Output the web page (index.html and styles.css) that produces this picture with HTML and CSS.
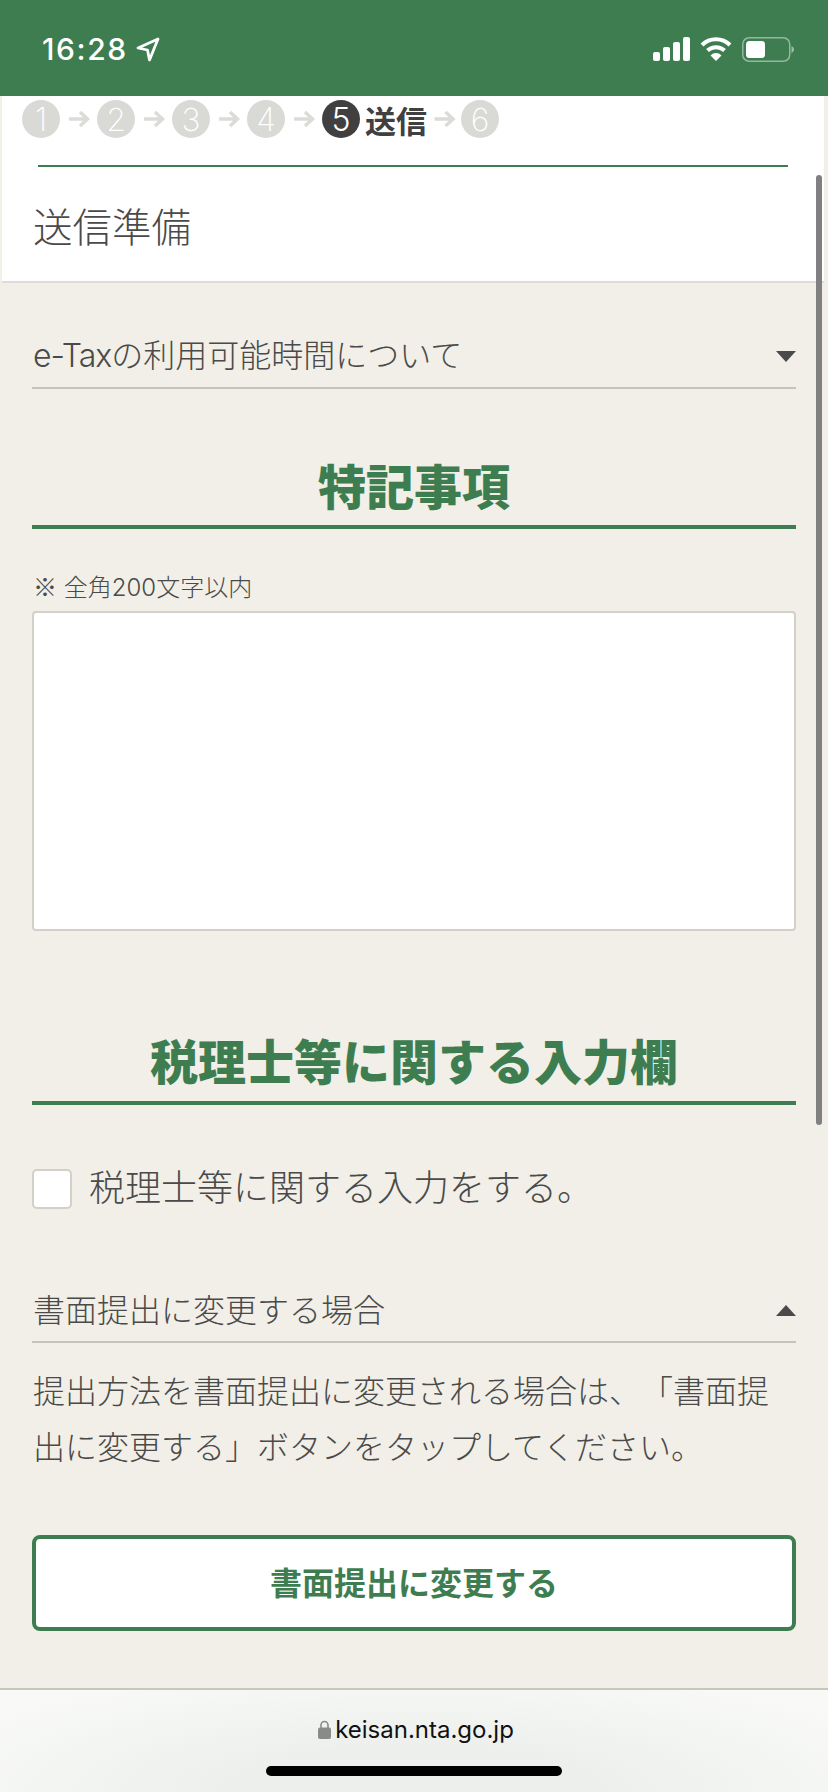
FILE: index.html
```html
<!DOCTYPE html>
<html lang="ja">

<head>
  <meta charset="UTF-8">
  <title>送信準備</title>
  <link rel="stylesheet" href="styles.css">
</head>

<body>
  <div class="phone">
    <div class="status-bar">
      <div class="status-left">
        <span class="time">16:28</span>
        <svg class="location" width="24" height="25" viewBox="0 0 24 25">
          <path d="M22 2 L2 11 L11.500 13 L13.500 23 Z" fill="none" stroke="#fff" stroke-width="2.800" stroke-linejoin="round"/>
        </svg>
      </div>
      <div class="status-right">
        <svg width="37" height="24" viewBox="0 0 37 24">
          <rect x="0" y="15" width="7" height="9" rx="2" fill="#fff"/>
          <rect x="10" y="10" width="7" height="14" rx="2" fill="#fff"/>
          <rect x="20" y="5" width="7" height="19" rx="2" fill="#fff"/>
          <rect x="30" y="0" width="7" height="24" rx="2" fill="#fff"/>
        </svg>
        <svg width="32" height="24" viewBox="0 0 32 24">
          <path d="M2 8 A20 20 0 0 1 30 8" fill="none" stroke="#fff" stroke-width="4"/>
          <path d="M7.500 13.500 A12.500 12.500 0 0 1 24.500 13.500" fill="none" stroke="#fff" stroke-width="4"/>
          <path d="M16 24 L10.500 18.500 A7.500 7.500 0 0 1 21.500 18.500 Z" fill="#fff"/>
        </svg>
        <svg width="52" height="25" viewBox="0 0 52 25">
          <rect x="0.750" y="0.750" width="47" height="23.500" rx="6.500" fill="none" stroke="#fff" stroke-opacity="0.45" stroke-width="1.500"/>
          <rect x="4" y="4" width="19" height="17" rx="3.500" fill="#fff"/>
          <path d="M49.500 9 C51 10 52 11 52 12.500 C52 14 51 15 49.500 16 Z" fill="#fff" fill-opacity="0.5"/>
        </svg>
      </div>
    </div>

    <div class="top-card">
      <div class="steps">
        <span class="step-num">1</span>
        <svg class="step-arrow" width="37" height="22" viewBox="0 0 37 22"><path d="M9 11 H27 M20 4 L27.500 11 L20 18" fill="none" stroke="#dbdbd7" stroke-width="3.500"/></svg>
        <span class="step-num">2</span>
        <svg class="step-arrow" width="37" height="22" viewBox="0 0 37 22"><path d="M9 11 H27 M20 4 L27.500 11 L20 18" fill="none" stroke="#dbdbd7" stroke-width="3.500"/></svg>
        <span class="step-num">3</span>
        <svg class="step-arrow" width="37" height="22" viewBox="0 0 37 22"><path d="M9 11 H27 M20 4 L27.500 11 L20 18" fill="none" stroke="#dbdbd7" stroke-width="3.500"/></svg>
        <span class="step-num">4</span>
        <svg class="step-arrow" width="37" height="22" viewBox="0 0 37 22"><path d="M9 11 H27 M20 4 L27.500 11 L20 18" fill="none" stroke="#dbdbd7" stroke-width="3.500"/></svg>
        <span class="step-num step-current">5</span>
        <span class="step-label">送信</span>
        <svg class="step-arrow" width="34" height="22" viewBox="1.500 0 34 22"><path d="M9 11 H27 M20 4 L27.500 11 L20 18" fill="none" stroke="#dbdbd7" stroke-width="3.500"/></svg>
        <span class="step-num">6</span>
      </div>
      <div class="step-line"></div>
      <h1 class="page-title">送信準備</h1>
    </div>

    <div class="content">
      <div class="accordion accordion-first">
        <span class="accordion-text"><span class="latin">e-Tax</span>の利用可能時間について</span>
        <span class="tri tri-down"></span>
      </div>

      <h2 class="heading heading-first">特記事項</h2>
      <p class="note"><span class="note-mark">※</span> 全角200文字以内</p>
      <div class="textarea"></div>

      <h2 class="heading heading-second">税理士等に関する入力欄</h2>
      <div class="check-row">
        <span class="checkbox"></span>
        <span class="check-label">税理士等に関する入力をする。</span>
      </div>

      <div class="accordion accordion-second">
        <span class="accordion-text">書面提出に変更する場合</span>
        <span class="tri tri-up"></span>
      </div>
      <p class="body-text">提出方法を書面提出に変更される場合は、「書面提出に変更する」ボタンをタップしてください。</p>
      <div class="button"><span class="button-text">書面提出に変更する</span></div>
    </div>

    <div class="url-bar">
      <div class="url">
        <svg width="13" height="19" viewBox="0 0 13 19">
          <path d="M3 8 V5 A3.500 3.500 0 0 1 10 5 V8" fill="none" stroke="#8a8a8a" stroke-width="1.600"/>
          <rect x="0" y="7.500" width="13" height="11.500" rx="2" fill="#8a8a8a"/>
        </svg>
        <span>keisan.nta.go.jp</span>
      </div>
      <div class="home-bar"></div>
    </div>

    <div class="scrollbar"></div>
  </div>
</body>

</html>
```

FILE: styles.css
```css
* {
  box-sizing: border-box;
}

body {
  margin: 0;
  font-family: 'Inter', 'Noto Sans CJK JP', sans-serif;
  color: #4a4a4a;
  background-color: #f1efe7;
  text-spacing-trim: space-all;
}

.phone {
  position: relative;
  display: flex;
  flex-direction: column;
  width: 828px;
  height: 1792px;
  overflow: hidden;
}

/* status bar */
.status-bar {
  flex: none;
  display: flex;
  justify-content: space-between;
  height: 96px;
  padding: 34px 34px 0 42px;
  background-color: #3e7d50;
}

.status-left {
  display: flex;
  align-items: flex-start;
  gap: 8px;
  height: 30px;
}

.time {
  font-size: 30px;
  font-weight: 500;
  line-height: 30px;
  letter-spacing: 1.6px;
  color: #ffffff;
}

.location {
  margin-top: 3px;
}

.status-right {
  display: flex;
  align-items: flex-start;
  gap: 10px;
  margin-top: 3px;
}

/* steps */
.top-card {
  flex: none;
  height: 187px;
  margin: 0 4px 0 2px;
  background-color: #ffffff;
  border-bottom: 2px solid #dddcd8;
}

.steps {
  display: flex;
  align-items: center;
  height: 38px;
  margin-top: 4px;
  padding-left: 20px;
}

.step-num {
  display: flex;
  align-items: center;
  justify-content: center;
  flex: none;
  width: 38px;
  height: 38px;
  border-radius: 50%;
  font-size: 32px;
  font-weight: 200;
  color: #ffffff;
  background-color: #d9d9d6;
}

.step-current {
  font-weight: 300;
  background-color: #404040;
}

.step-arrow {
  flex: none;
}

.step-label {
  margin-left: 5px;
  padding-top: 5px;
  font-size: 31px;
  font-weight: 700;
  line-height: 38px;
  color: #404040;
}

.step-line {
  height: 2px;
  margin: 27px 36px 0 36px;
  background-color: #3e7d50;
}

.page-title {
  margin: 32px 0 0 31px;
  font-size: 39.500px;
  font-weight: 300;
  line-height: 58px;
}

/* main column */
.content {
  flex: 1;
  padding: 0 32px;
}

.accordion {
  display: flex;
  align-items: center;
  justify-content: space-between;
  padding: 0 0 0 1px;
  border-bottom: 2px solid #c5c3bb;
}

.accordion-text {
  padding-bottom: 6px;
  font-size: 32px;
  font-weight: 300;
  line-height: 44px;
}

.latin {
  letter-spacing: -1px;
}

.accordion-first {
  height: 59px;
  margin-top: 47px;
}

.accordion-second {
  height: 62px;
  margin-top: 71px;
}

.accordion-second .accordion-text {
  padding-bottom: 1px;
}

.tri {
  width: 0;
  height: 0;
  margin-bottom: 4px;
  border-left: 10px solid transparent;
  border-right: 10px solid transparent;
}

.tri-down {
  border-top: 11px solid #4a4a4a;
}

.tri-up {
  margin-bottom: 2px;
  border-bottom: 11px solid #4a4a4a;
}

.heading {
  margin: 0;
  border-bottom: 4px solid #3e7d50;
  text-align: center;
  font-size: 48px;
  font-weight: 900;
  line-height: 64px;
  color: #3e7d50;
}

.heading-first {
  margin-top: 67px;
  padding-bottom: 5px;
}

.heading-second {
  margin-top: 100px;
  padding-bottom: 6px;
}

.note {
  height: 34px;
  margin: 42px 0 0 1px;
  font-size: 24px;
  font-weight: 300;
  line-height: 34px;
}

.note-mark {
  font-family: 'Noto Sans CJK JP', sans-serif;
  line-height: 1;
}

.textarea {
  height: 320px;
  margin-top: 6px;
  background-color: #ffffff;
  border: 2px solid #d2d0c8;
  border-radius: 4px;
}

.check-row {
  display: flex;
  align-items: center;
  gap: 17px;
  margin-top: 63px;
}

.checkbox {
  flex: none;
  width: 40px;
  height: 40px;
  background-color: #ffffff;
  border: 2px solid #d2d0c8;
  border-radius: 5px;
}

.check-label {
  padding-bottom: 2px;
  font-size: 36px;
  font-weight: 300;
  line-height: 40px;
}

.body-text {
  margin: 21px 0 0 1px;
  font-size: 32px;
  font-weight: 300;
  line-height: 56px;
}

.button {
  display: flex;
  align-items: center;
  justify-content: center;
  height: 96px;
  margin-top: 59px;
  background-color: #ffffff;
  border: 4px solid #3e7d50;
  border-radius: 8px;
  color: #3e7d50;
}

.button-text {
  padding-bottom: 4px;
  font-size: 32px;
  font-weight: 700;
}

/* browser bar */
.url-bar {
  flex: none;
  display: flex;
  flex-direction: column;
  align-items: center;
  height: 104px;
  border-top: 2px solid #c9c6bd;
  background: radial-gradient(ellipse at 50% 100%, #ecefec 30%, #f9faf8 90%);
}

.url {
  display: flex;
  align-items: center;
  gap: 4px;
  height: 30px;
  margin-top: 24px;
  padding-left: 4px;
  font-size: 24px;
  color: #111111;
}

.home-bar {
  width: 296px;
  height: 10px;
  margin-top: 22px;
  border-radius: 5px;
  background-color: #000000;
}

.scrollbar {
  position: absolute;
  left: 816px;
  top: 175px;
  width: 6px;
  height: 950px;
  border-radius: 3px;
  background-color: #808080;
}
```
